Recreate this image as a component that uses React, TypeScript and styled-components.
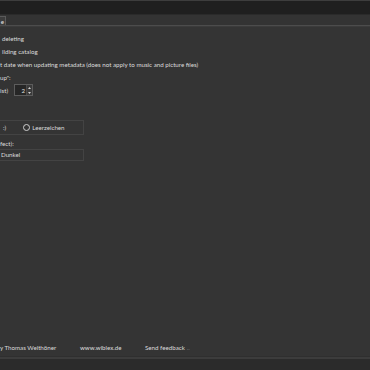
import React from "react";
import styled, { createGlobalStyle } from "styled-components";

const Global = createGlobalStyle`
  html, body { margin: 0; padding: 0; background: #343434; }
  body { font-family: "Lato", "Open Sans", sans-serif; }
`;

const Page = styled.div`
  width: 370px;
  height: 370px;
  display: flex;
  flex-direction: column;
  background: #343434;
  color: #dcdcdc;
  font-size: 6.2px;
  overflow: hidden;
`;

const TitleBar = styled.div`
  height: 14px;
  background: #1f1f1f;
  border-top: 1px solid #3d3d3d;
  border-bottom: 1px solid #2a2a2a;
`;

const TabStrip = styled.div`
  height: 9px;
  padding-top: 1px;
  display: flex;
  align-items: flex-end;
  border-bottom: 1px solid #4c4c4c;
  background: #333333;
`;

const Tab = styled.div`
  width: 6px;
  height: 9px;
  background: #3c3c3c;
  border: 1px solid #5a5a5a;
  border-left: none;
  border-bottom: none;
  display: flex;
  align-items: center;
  justify-content: flex-end;
  padding-right: 1px;
  box-sizing: border-box;
  overflow: hidden;
  color: #e6e6e6;
`;

const Under = styled.div`
  height: 1px;
  background: #3b3b3b;
`;

const Body = styled.div`
  flex: 1;
  display: flex;
  flex-direction: column;
  padding-top: 5px;
`;

const Row = styled.div<{ $h?: number; $x?: number }>`
  height: ${(p) => p.$h ?? 13}px;
  display: flex;
  align-items: center;
  gap: 5px;
  padding-left: ${(p) => p.$x ?? 0}px;
  white-space: nowrap;
`;

const Spin = styled.div`
  width: 19px;
  height: 12px;
  display: flex;
  box-sizing: border-box;
  border: 1px solid #5c5c5c;
  background: #262626;
  margin-left: 1px;
`;

const SpinValue = styled.div`
  flex: 1;
  display: flex;
  align-items: center;
  justify-content: flex-end;
  padding-right: 1px;
  color: #e0e0e0;
`;

const SpinArrows = styled.div`
  width: 5px;
  display: flex;
  flex-direction: column;
  border-left: 1px solid #4a4a4a;
  background: #3a3a3a;
`;

const Arrow = styled.div`
  flex: 1;
  display: flex;
  align-items: center;
  justify-content: center;
`;

const Gap = styled.div<{ $h: number }>`
  height: ${(p) => p.$h}px;
`;

const Group = styled.div`
  width: 84px;
  height: 15px;
  box-sizing: border-box;
  border: 1px solid #434343;
  border-left: none;
  display: flex;
  align-items: center;
  padding-left: 3px;
  white-space: nowrap;
`;

const Radio = styled.span`
  width: 5px;
  height: 5px;
  border-radius: 50%;
  border: 1px solid #cfcfcf;
  display: inline-block;
  margin-left: 17px;
  margin-right: 2px;
`;

const Combo = styled.div`
  width: 84px;
  height: 12px;
  box-sizing: border-box;
  border: 1px solid #434343;
  border-left: none;
  display: flex;
  align-items: center;
  padding-left: 1px;
`;

const Footer = styled.div`
  height: 16px;
  display: flex;
  align-items: center;
  white-space: nowrap;
`;

const FootLink = styled.span<{ $w: number }>`
  display: inline-block;
  width: ${(p) => p.$w}px;
`;

const Dots = styled.span`
  color: #7a7a7a;
  margin-left: 2px;
`;

const FootLine = styled.div`
  height: 2px;
  background: #3c3c3c;
  border-top: 1px solid #2f2f2f;
`;

const BottomBar = styled.div`
  height: 12px;
  background: #2b2b2b;
`;

export default function App() {
  return (
    <>
      <Global />
      <Page>
        <TitleBar />
        <TabStrip>
          <Tab>e</Tab>
        </TabStrip>
        <Under />
        <Body>
          <Row $x={2}>deleting</Row>
          <Row $x={2}>ilding catalog</Row>
          <Row>t date when updating metadata (does not apply to music and picture files)</Row>
          <Row>up":</Row>
          <Row>
            ist)
            <Spin>
              <SpinValue>2</SpinValue>
              <SpinArrows>
                <Arrow>
                  <svg width="3" height="2" viewBox="0 0 3 2"><path d="M0 2 L1.5 0 L3 2Z" fill="#d0d0d0" /></svg>
                </Arrow>
                <Arrow>
                  <svg width="3" height="2" viewBox="0 0 3 2"><path d="M0 0 L1.5 2 L3 0Z" fill="#d0d0d0" /></svg>
                </Arrow>
              </SpinArrows>
            </Spin>
          </Row>
          <Gap $h={23} />
          <Group>
            :)
            <Radio />
            Leerzeichen
          </Group>
          <Gap $h={3} />
          <Row $h={11}>fect):</Row>
          <Combo>Dunkel</Combo>
          <Gap $h={179} />
          <Footer>
            <FootLink $w={80}>y Thomas Weithöner</FootLink>
            <FootLink $w={65}>www.wiblex.de</FootLink>
            <span>Send feedback</span>
            <Dots>..</Dots>
          </Footer>
        </Body>
        <FootLine />
        <BottomBar />
      </Page>
    </>
  );
}
